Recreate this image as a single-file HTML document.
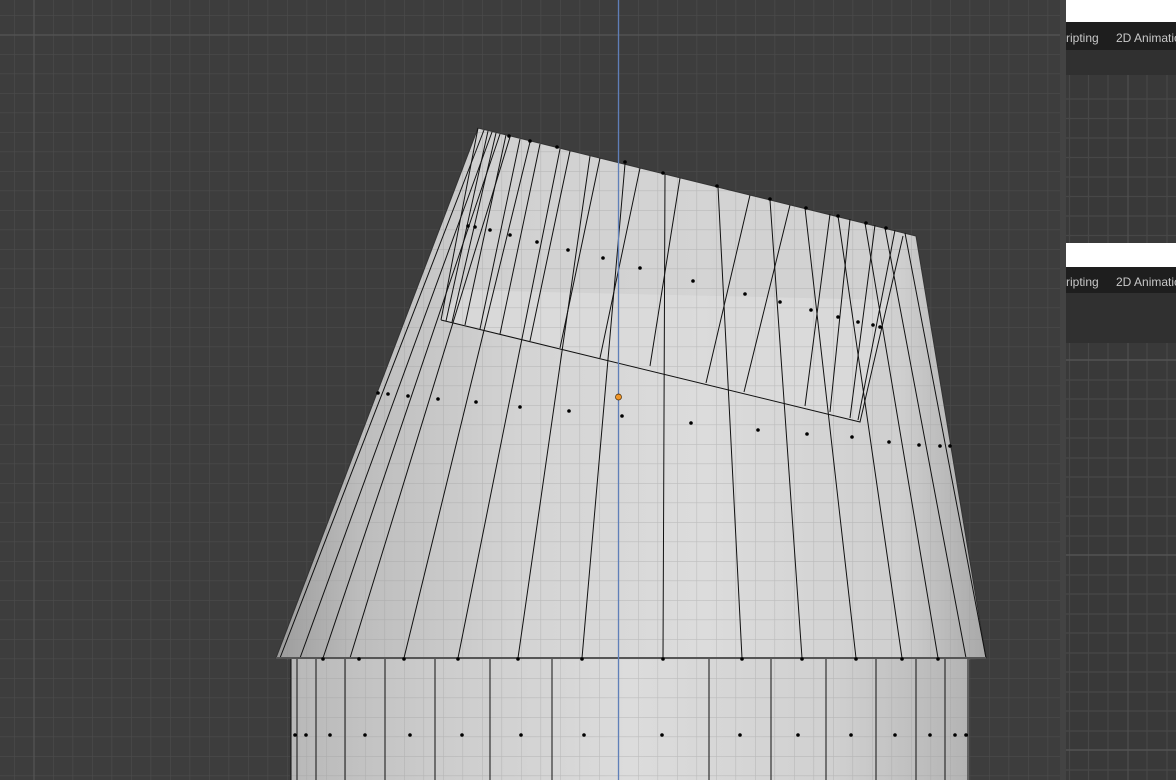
<!DOCTYPE html>
<html><head><meta charset="utf-8"><style>
html,body{margin:0;padding:0;width:1176px;height:780px;overflow:hidden;background:#3c3c3c;font-family:"Liberation Sans",sans-serif}
svg{position:absolute;left:0;top:0}
.rp{position:absolute;left:1066px;width:110px}
.hdr{color:#c8c8c8;font-size:12px;white-space:nowrap;line-height:28px}
</style></head><body>
<svg width="1176" height="780" viewBox="0 0 1176 780">
<defs>
<pattern id="g" x="14" y="15" width="19.5" height="19.5" patternUnits="userSpaceOnUse">
<path d="M0 0V19.5M0 0H19.5" stroke="#4b4b4b" stroke-width="1.3" fill="none"/>
</pattern>
<pattern id="gm" x="14" y="15" width="19.5" height="19.5" patternUnits="userSpaceOnUse">
<path d="M0 0V19.5M0 0H19.5" stroke="#9a9a9a" stroke-opacity="0.45" stroke-width="1.2" fill="none"/>
</pattern>
<linearGradient id="cone" x1="0" y1="0" x2="1" y2="0">
<stop offset="0" stop-color="#9c9c9c"/><stop offset="0.12" stop-color="#bdbdbd"/>
<stop offset="0.35" stop-color="#d4d4d4"/><stop offset="0.6" stop-color="#dcdcdc"/>
<stop offset="0.88" stop-color="#cfcfcf"/><stop offset="1" stop-color="#a8a8a8"/>
</linearGradient>
<linearGradient id="cyl" x1="0" y1="0" x2="1" y2="0">
<stop offset="0" stop-color="#b8b8b8"/><stop offset="0.2" stop-color="#cbcbcb"/>
<stop offset="0.5" stop-color="#dcdcdc"/><stop offset="0.8" stop-color="#d0d0d0"/>
<stop offset="1" stop-color="#b4b4b4"/>
</linearGradient>
<clipPath id="mc"><path d="M478 128L916 236L986 658L969 660V780H291V660L276 658Z"/></clipPath>
</defs>
<rect width="1176" height="780" fill="#3d3d3d"/>
<rect width="1176" height="780" fill="url(#g)"/>
<line x1="34" y1="0" x2="34" y2="780" stroke="#555" stroke-width="1.2"/>
<line x1="0" y1="35" x2="1066" y2="35" stroke="#555" stroke-width="1.2"/>
<!-- cylinder -->
<rect x="291" y="658" width="678" height="122" fill="url(#cyl)"/>
<!-- cone -->
<path d="M478 128L916 236L986 658L276 658Z" fill="url(#cone)"/>
<path d="M478 128L916 236L903 236L860 422L441 320Z" fill="#d0d0d0" opacity="0.7"/>
<path d="M441 320L860 422L890 300L460 290Z" fill="#e2e2e2" opacity="0.5"/>
<rect width="1176" height="780" fill="url(#gm)" clip-path="url(#mc)"/>
<g stroke="#111" stroke-width="1" fill="none">
<path d="M478 128L916 236L986 658L276 658Z" stroke="#333"/>
<path d="M441 320L860 422L903 236M441 320L478 128" />
<!-- back rim lines -->
<path d="M488 131L446 321M496 133L452 322M506 135L465 325M520 139L480 329M540 144L500 334M570 151L530 341M600 158L560 348M640 168L600 358M680 178L650 366M750 195L706 383M790 205L744 392M830 214L805 406M850 219L830 412M875 225L850 418M895 230L858 420"/>
<!-- front lines -->
<path d="M484 130L280 658M492 132L300 658M500 134L323 658M510 137L350 658M530 142L404 658M560 149L458 658M590 156L518 658M625 164L582 658M665 174L663 658M718 187L742 658M770 200L802 658M805 208L856 658M838 216L902 658M865 223L938 658M885 228L966 658M905 233L986 658"/>
<path d="M297 658V780M316 658V780M345 658V780M385 658V780M435 658V780M490 658V780M552 658V780M709 658V780M771 658V780M826 658V780M876 658V780M916 658V780M945 658V780M968 658V780M291 658V780"/>
<path d="M276 658H986" stroke="#555" stroke-width="2"/>
</g>
<g fill="#000">
<circle cx="509" cy="136" r="1.8"/><circle cx="530" cy="141" r="1.8"/><circle cx="557" cy="147" r="1.8"/><circle cx="625" cy="162" r="1.8"/><circle cx="663" cy="173" r="1.8"/><circle cx="717" cy="186" r="1.8"/><circle cx="770" cy="199" r="1.8"/><circle cx="806" cy="208" r="1.8"/><circle cx="838" cy="216" r="1.8"/><circle cx="866" cy="223" r="1.8"/><circle cx="886" cy="228" r="1.8"/>
<circle cx="468" cy="226" r="1.8"/><circle cx="475" cy="227" r="1.8"/><circle cx="490" cy="230" r="1.8"/><circle cx="510" cy="235" r="1.8"/><circle cx="537" cy="242" r="1.8"/><circle cx="568" cy="250" r="1.8"/><circle cx="603" cy="258" r="1.8"/><circle cx="640" cy="268" r="1.8"/><circle cx="693" cy="281" r="1.8"/><circle cx="745" cy="294" r="1.8"/><circle cx="780" cy="302" r="1.8"/><circle cx="811" cy="310" r="1.8"/><circle cx="838" cy="317" r="1.8"/><circle cx="858" cy="322" r="1.8"/><circle cx="873" cy="325" r="1.8"/><circle cx="880" cy="327" r="1.8"/>
<circle cx="378" cy="393" r="1.8"/><circle cx="388" cy="394" r="1.8"/><circle cx="408" cy="396" r="1.8"/><circle cx="438" cy="399" r="1.8"/><circle cx="476" cy="402" r="1.8"/><circle cx="520" cy="407" r="1.8"/><circle cx="569" cy="411" r="1.8"/><circle cx="622" cy="416" r="1.8"/><circle cx="691" cy="423" r="1.8"/><circle cx="758" cy="430" r="1.8"/><circle cx="807" cy="434" r="1.8"/><circle cx="852" cy="437" r="1.8"/><circle cx="889" cy="442" r="1.8"/><circle cx="919" cy="445" r="1.8"/><circle cx="940" cy="446" r="1.8"/><circle cx="950" cy="446" r="1.8"/>
<circle cx="323" cy="659" r="1.8"/><circle cx="359" cy="659" r="1.8"/><circle cx="404" cy="659" r="1.8"/><circle cx="458" cy="659" r="1.8"/><circle cx="518" cy="659" r="1.8"/><circle cx="582" cy="659" r="1.8"/><circle cx="663" cy="659" r="1.8"/><circle cx="742" cy="659" r="1.8"/><circle cx="802" cy="659" r="1.8"/><circle cx="856" cy="659" r="1.8"/><circle cx="902" cy="659" r="1.8"/><circle cx="938" cy="659" r="1.8"/>
<circle cx="295" cy="735" r="1.8"/><circle cx="306" cy="735" r="1.8"/><circle cx="330" cy="735" r="1.8"/><circle cx="365" cy="735" r="1.8"/><circle cx="410" cy="735" r="1.8"/><circle cx="462" cy="735" r="1.8"/><circle cx="521" cy="735" r="1.8"/><circle cx="584" cy="735" r="1.8"/><circle cx="662" cy="735" r="1.8"/><circle cx="740" cy="735" r="1.8"/><circle cx="798" cy="735" r="1.8"/><circle cx="851" cy="735" r="1.8"/><circle cx="895" cy="735" r="1.8"/><circle cx="930" cy="735" r="1.8"/><circle cx="955" cy="735" r="1.8"/><circle cx="966" cy="735" r="1.8"/>
</g>
<line x1="618.5" y1="0" x2="618.5" y2="780" stroke="#5f7fb8" stroke-width="1.3"/>
<circle cx="618.5" cy="397" r="3" fill="#f0962a" stroke="#4a2a00" stroke-width="0.7"/>
<!-- right panel -->
<rect x="1060" y="0" width="6" height="780" fill="#434343"/>
<rect x="1066" y="0" width="110" height="780" fill="#393939"/>
<g stroke="#474747" stroke-width="1.2">
<path d="M1069.5 75V780M1088.5 75V780M1108 75V780M1147 75V780M1167 75V780"/>
<path d="M1066 99H1176M1066 118.5H1176M1066 138H1176M1066 157.5H1176M1066 177H1176M1066 196.5H1176M1066 216H1176M1066 235.5H1176"/>
<path d="M1066 360H1176M1066 380H1176M1066 399H1176M1066 419H1176M1066 438H1176M1066 458H1176M1066 477H1176M1066 497H1176M1066 516H1176M1066 536H1176M1066 555H1176M1066 575H1176M1066 594H1176M1066 614H1176M1066 633H1176M1066 653H1176M1066 672H1176M1066 692H1176M1066 711H1176M1066 731H1176M1066 750H1176M1066 770H1176"/>
</g>
<path d="M1128 75V780" stroke="#505050" stroke-width="1.2"/>
<path d="M1066 360H1176M1066 555H1176M1066 750H1176" stroke="#555" stroke-width="1.2"/>
<rect x="1066" y="0" width="110" height="22" fill="#fff"/>
<rect x="1066" y="22" width="110" height="28" fill="#1e1e1e"/>
<rect x="1066" y="50" width="110" height="25" fill="#303030"/>
<rect x="1066" y="243" width="110" height="24" fill="#fff"/>
<rect x="1066" y="267" width="110" height="26" fill="#1e1e1e"/>
<rect x="1066" y="293" width="110" height="50" fill="#303030"/>
</svg>
<div class="rp hdr" style="top:24px;overflow:hidden;height:28px"><span style="position:absolute;left:-14px">Scripting</span><span style="position:absolute;left:50px">2D Animation</span></div>
<div class="rp hdr" style="top:268px;overflow:hidden;height:28px"><span style="position:absolute;left:-14px">Scripting</span><span style="position:absolute;left:50px">2D Animation</span></div>
</body></html>
